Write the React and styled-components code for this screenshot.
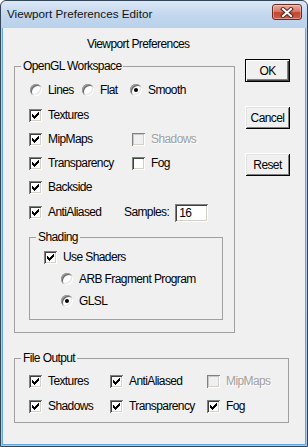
import React from 'react';
import styled, { createGlobalStyle } from 'styled-components';

const dialogFont = `"Liberation Sans", Arial, sans-serif`;

const GlobalStyle = createGlobalStyle`
  html, body {
    margin: 0;
    padding: 0;
    background: #ffffff;
  }
  * {
    box-sizing: border-box;
  }
`;

const CheckMark = ({ disabled }) => (
  <svg width="13" height="13" viewBox="0 0 13 13" shapeRendering="crispEdges">
    <path
      d="M3 5h1v3h-1z M4 6h1v3h-1z M5 7h1v3h-1z M6 6h1v3h-1z M7 5h1v3h-1z M8 4h1v3h-1z M9 3h1v3h-1z"
      fill={disabled ? '#a0a0a0' : '#000000'}
    />
  </svg>
);

const CloseGlyph = () => (
  <svg width="14" height="11" viewBox="0 0 14 11">
    <path d="M3 2 L11 9 M11 2 L3 9" stroke="#4a2a24" strokeWidth="4" strokeLinecap="square" />
    <path d="M3 2 L11 9 M11 2 L3 9" stroke="#ffffff" strokeWidth="2" strokeLinecap="square" />
  </svg>
);

const Option = ({ kind = 'check', checked, disabled, label }) => (
  <OptionWrap>
    {kind === 'check' ? (
      <CheckBox $disabled={disabled}>{checked && <CheckMark disabled={disabled} />}</CheckBox>
    ) : (
      <RadioButton $checked={checked} />
    )}
    <OptionLabel $disabled={disabled}>{label}</OptionLabel>
  </OptionWrap>
);

const App = () => {
  return (
    <>
      <GlobalStyle />
      <Window>
        <TitleBar>
          <Title>Viewport Preferences Editor</Title>
          <CloseButton>
            <CloseGlyph />
          </CloseButton>
        </TitleBar>
        <Body>
          <Heading>Viewport Preferences</Heading>
          <MainRow>
            <Group $width={221}>
              <Legend>OpenGL Workspace</Legend>
              <GroupContent $pt={4} $pb={12}>
                <Row $h={26} $cols="52px 48px auto">
                  <Option kind="radio" label="Lines" />
                  <Option kind="radio" label="Flat" />
                  <Option kind="radio" checked label="Smooth" />
                </Row>
                <Row $h={24} $cols="103px auto">
                  <Option checked label="Textures" />
                </Row>
                <Row $h={24} $cols="103px auto">
                  <Option checked label="MipMaps" />
                  <Option disabled label="Shadows" />
                </Row>
                <Row $h={24} $cols="103px auto">
                  <Option checked label="Transparency" />
                  <Option label="Fog" />
                </Row>
                <Row $h={24} $cols="103px auto">
                  <Option checked label="Backside" />
                </Row>
                <Row $h={26} $cols="95px auto">
                  <Option checked label="AntiAliased" />
                  <SamplesField>
                    <span>Samples:</span>
                    <SamplesInput defaultValue="16" />
                  </SamplesField>
                </Row>
                <Group $width={194} $mt={5}>
                  <Legend>Shading</Legend>
                  <GroupContent $pt={2} $pb={7}>
                    <Row $h={22}>
                      <Option checked label="Use Shaders" />
                    </Row>
                    <Row $h={22} $indent={16}>
                      <Option kind="radio" label="ARB Fragment Program" />
                    </Row>
                    <Row $h={22} $indent={16}>
                      <Option kind="radio" checked label="GLSL" />
                    </Row>
                  </GroupContent>
                </Group>
              </GroupContent>
            </Group>
            <Buttons>
              <DialogButton $default>OK</DialogButton>
              <DialogButton>Cancel</DialogButton>
              <DialogButton>Reset</DialogButton>
            </Buttons>
          </MainRow>
          <Group $width={275} $mt={18}>
            <Legend>File Output</Legend>
            <GroupContent $pt={4} $pb={3}>
              <Row $h={24} $cols="81px 97px auto">
                <Option checked label="Textures" />
                <Option checked label="AntiAliased" />
                <Option disabled label="MipMaps" />
              </Row>
              <Row $h={26} $cols="81px 97px auto">
                <Option checked label="Shadows" />
                <Option checked label="Transparency" />
                <Option checked label="Fog" />
              </Row>
            </GroupContent>
          </Group>
        </Body>
      </Window>
    </>
  );
};

const Window = styled.div`
  width: 308px;
  height: 447px;
  display: flex;
  flex-direction: column;
  border: 1px solid #34465a;
  border-radius: 6px 6px 0 0;
  padding: 0 1px 1px;
  background: linear-gradient(#dce8f6 0px, #c3d7ee 14px, #b9d1ea 27px, #a9c9ea 100%);
  overflow: hidden;
`;

const TitleBar = styled.div`
  height: 27px;
  display: flex;
  align-items: flex-start;
  justify-content: space-between;
  padding: 0 4px 0 5px;
`;

const Title = styled.div`
  font-family: 'Liberation Sans', Arial, sans-serif;
  font-size: 11.7px;
  line-height: 14px;
  color: #141414;
  margin-top: 6px;
`;

const CloseButton = styled.div`
  width: 30px;
  height: 16px;
  margin-top: 3px;
  border: 1px solid #6b2a20;
  border-radius: 3px;
  display: flex;
  align-items: center;
  justify-content: center;
  background: linear-gradient(#e9a99b 0%, #d77c69 45%, #c4432d 55%, #d0604a 100%);
  box-shadow: inset 0 0 0 1px rgba(255, 255, 255, 0.35);
`;

const Body = styled.div`
  flex: 1;
  background: #f0f0f0;
  border: 1px solid #62a8dc;
  border-top: none;
  padding: 9px 0 0 11px;
  font-family: ${dialogFont};
  font-size: 12px;
  letter-spacing: -0.6px;
  color: #000000;
`;

const Heading = styled.div`
  line-height: 14px;
  padding-left: 73px;
`;

const MainRow = styled.div`
  display: flex;
  align-items: flex-start;
  gap: 10px;
  margin-top: 8px;
`;

const Group = styled.fieldset`
  width: ${(p) => p.$width}px;
  margin: ${(p) => p.$mt || 0}px 0 0;
  padding: 0;
  min-width: 0;
  border: 1px solid #a0a0a0;
`;

const Legend = styled.legend`
  margin-left: 6px;
  padding: 0 2px;
  line-height: 14px;
`;

const GroupContent = styled.div`
  padding: ${(p) => p.$pt}px 0 ${(p) => p.$pb}px 14px;
`;

const Row = styled.div`
  height: ${(p) => p.$h}px;
  display: grid;
  grid-template-columns: ${(p) => p.$cols || '1fr'};
  align-items: center;
  padding-left: ${(p) => p.$indent || 0}px;
`;

const OptionWrap = styled.div`
  display: flex;
  align-items: center;
  white-space: nowrap;
`;

const CheckBox = styled.span`
  width: 13px;
  height: 13px;
  flex: none;
  display: block;
  margin-right: 6px;
  background: ${(p) => (p.$disabled ? '#f0f0f0' : '#ffffff')};
  box-shadow: inset 1px 1px 0 #808080, inset -1px -1px 0 #ffffff,
    inset 2px 2px 0 ${(p) => (p.$disabled ? '#c8c8c8' : '#404040')},
    inset -2px -2px 0 #d4d0c8;
  svg {
    display: block;
  }
`;

const RadioButton = styled.span`
  position: relative;
  width: 12px;
  height: 12px;
  flex: none;
  margin: 0 6px 0 1px;
  border-radius: 50%;
  background: #ffffff;
  box-shadow: inset 1px 1px 0 #a0a0a0, inset -1px -1px 0 #ffffff,
    inset 2px 2px 0 #6a6a6a, inset -2px -2px 0 #e3e3e3;
  &::after {
    content: '';
    display: ${(p) => (p.$checked ? 'block' : 'none')};
    position: absolute;
    left: 4px;
    top: 4px;
    width: 4px;
    height: 4px;
    border-radius: 50%;
    background: #000000;
  }
`;

const OptionLabel = styled.span`
  line-height: 14px;
  color: ${(p) => (p.$disabled ? '#a0a0a0' : '#000000')};
  text-shadow: ${(p) => (p.$disabled ? '1px 1px 0 #ffffff' : 'none')};
`;

const SamplesField = styled.div`
  display: flex;
  align-items: center;
  gap: 6px;
`;

const SamplesInput = styled.input`
  width: 33px;
  height: 18px;
  margin-top: 2px;
  padding: 0 0 0 4px;
  border: none;
  outline: none;
  background: #ffffff;
  font: inherit;
  letter-spacing: inherit;
  color: #000000;
  box-shadow: inset 1px 1px 0 #808080, inset -1px -1px 0 #ffffff,
    inset 2px 2px 0 #404040, inset -2px -2px 0 #d4d0c8;
`;

const Buttons = styled.div`
  display: flex;
  flex-direction: column;
  gap: 24px;
`;

const DialogButton = styled.div`
  width: 45px;
  height: 23px;
  display: flex;
  align-items: center;
  justify-content: center;
  line-height: 14px;
  background: #f0f0f0;
  border: ${(p) => (p.$default ? '1px solid #000000' : 'none')};
  box-shadow: ${(p) =>
    p.$default
      ? 'inset 1px 1px 0 #ffffff, inset -1px -1px 0 #404040, inset -2px -2px 0 #808080'
      : 'inset 1px 1px 0 #ffffff, inset -1px -1px 0 #000000, inset 2px 2px 0 #e3e3e3, inset -2px -2px 0 #808080'};
`;

export default App;
